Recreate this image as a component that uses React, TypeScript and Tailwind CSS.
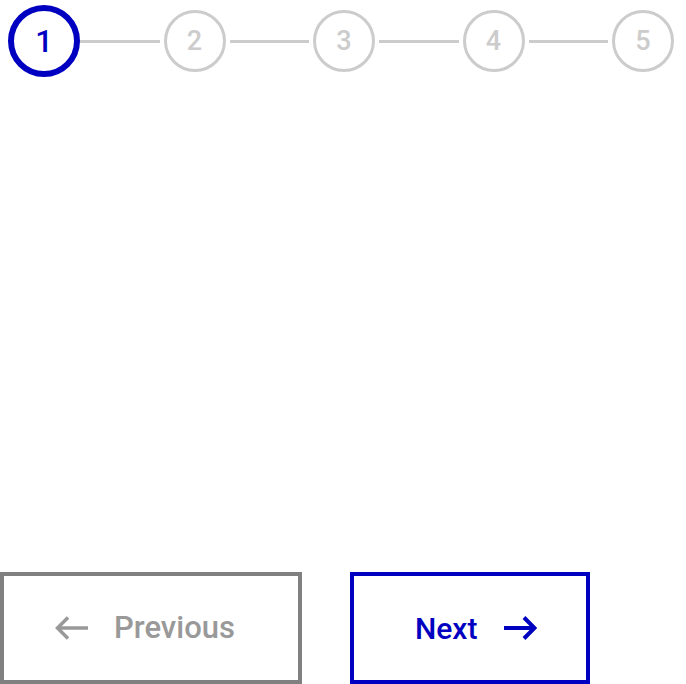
import React from "react";

const BLUE = "#0000c0";

function Step({ n, active }: { n: number; active?: boolean }) {
  if (active) {
    return (
      <div className="w-[72px] h-[72px] shrink-0 rounded-full border-[6px] border-[#0000c0] flex items-center justify-center text-[#0000c0] text-[31px] font-medium leading-none">
        {n}
      </div>
    );
  }
  return (
    <div className="w-[62px] h-[62px] shrink-0 rounded-full border-[3px] border-[#cccccc] flex items-center justify-center text-[#cccccc] text-[27px] font-medium leading-none">
      {n}
    </div>
  );
}

function Line({ first }: { first?: boolean }) {
  return <div className={first ? "flex-1 h-[3px] bg-[#cccccc] mr-1" : "flex-1 h-[3px] bg-[#cccccc] mx-1"} />;
}

export default function App() {
  return (
    <div
      className="h-[684px] w-[686px] flex flex-col justify-between bg-white"
      style={{ fontFamily: "Roboto, 'Liberation Sans', sans-serif" }}
    >
      <div className="flex items-center pl-[8px] pr-[12px] pt-[5px]">
        <Step n={1} active />
        <Line first />
        <Step n={2} />
        <Line />
        <Step n={3} />
        <Line />
        <Step n={4} />
        <Line />
        <Step n={5} />
      </div>
      <div className="flex gap-[48px]">
        <button className="w-[302px] h-[112px] border-4 border-[#808080] flex items-center pl-[51px] gap-[25px] text-[#999999] text-[31px] font-medium">
          <svg width="34" height="24" viewBox="0 0 34 24" fill="none" stroke="#999999" strokeWidth="3.5" strokeLinecap="butt" strokeLinejoin="miter">
            <path d="M2 12 H33" />
            <path d="M13 1.5 L2.5 12 L13 22.5" />
          </svg>
          <span>Previous</span>
        </button>
        <button className="w-[240px] h-[112px] border-4 border-[#0000c0] flex items-center pl-[61px] gap-[26px] text-[#0000c0] text-[30px] font-medium">
          <span>Next</span>
          <svg width="34" height="24" viewBox="0 0 34 24" fill="none" stroke={BLUE} strokeWidth="4" strokeLinecap="butt" strokeLinejoin="miter">
            <path d="M1 12 H31" />
            <path d="M21 1.5 L31.5 12 L21 22.5" />
          </svg>
        </button>
      </div>
    </div>
  );
}
